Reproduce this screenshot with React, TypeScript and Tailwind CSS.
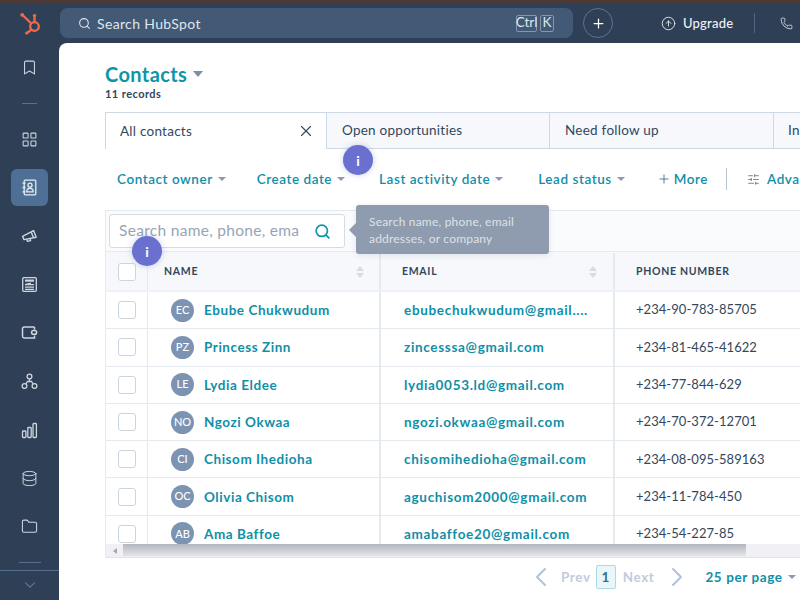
import {
  Bookmark,
  ChevronDown,
  ChevronLeft,
  ChevronRight,
  CircleArrowUp,
  Database,
  Folder,
  LayoutGrid,
  Phone,
  Plus,
  Search,
  SlidersHorizontal,
  X,
} from "lucide-react";

const contacts = [
  { initials: "EC", name: "Ebube Chukwudum", email: "ebubechukwudum@gmail....", phone: "+234-90-783-85705" },
  { initials: "PZ", name: "Princess Zinn", email: "zincesssa@gmail.com", phone: "+234-81-465-41622" },
  { initials: "LE", name: "Lydia Eldee", email: "lydia0053.ld@gmail.com", phone: "+234-77-844-629" },
  { initials: "NO", name: "Ngozi Okwaa", email: "ngozi.okwaa@gmail.com", phone: "+234-70-372-12701" },
  { initials: "CI", name: "Chisom Ihedioha", email: "chisomihedioha@gmail.com", phone: "+234-08-095-589163" },
  { initials: "OC", name: "Olivia Chisom", email: "aguchisom2000@gmail.com", phone: "+234-11-784-450" },
  { initials: "AB", name: "Ama Baffoe", email: "amabaffoe20@gmail.com", phone: "+234-54-227-85" },
];

function Caret({ className }: { className: string }) {
  return <span className={"inline-block h-0 w-0 border-x-[4px] border-t-[4px] border-x-transparent " + className} />;
}

function HubSpotLogo() {
  return (
    <svg width="22" height="24" viewBox="0 0 22 24" fill="none" stroke="#f2694a" strokeWidth="2.3" strokeLinecap="round">
      <circle cx="15.5" cy="15.5" r="4.3" />
      <path d="M15.5 11V5" />
      <path d="M12 12.3 4 4.5" />
      <path d="M12.2 18.8 8 22" />
      <circle cx="3.2" cy="3.8" r="1.9" fill="#f2694a" stroke="none" />
      <circle cx="7.6" cy="22" r="1.5" fill="#f2694a" stroke="none" />
      <circle cx="15.5" cy="4.6" r="1.7" fill="#f2694a" stroke="none" />
    </svg>
  );
}

function ContactBookIcon() {
  return (
    <svg width="17" height="17" viewBox="0 0 17 17" fill="none" stroke="currentColor" strokeWidth="1.3">
      <rect x="3.2" y="1.2" width="11.6" height="14.6" rx="1" />
      <circle cx="9" cy="6.2" r="2" />
      <path d="M5.8 12.8c0-2.3 1.4-3.4 3.2-3.4s3.2 1.1 3.2 3.4z" />
      <path d="M1.5 4.2h3M1.5 8.5h3M1.5 12.8h3" />
    </svg>
  );
}

function MegaphoneIcon() {
  return (
    <svg width="17" height="17" viewBox="0 0 17 17" fill="none" stroke="currentColor" strokeWidth="1.4" strokeLinejoin="round">
      <path d="M1.5 9.3 12.6 3.6l2.6 6.6L3 12.6z" />
      <path d="M10.2 4.9l2.4 6.2" />
      <path d="M5.6 12.2l1 2.2 3-.8-.5-2.2" />
    </svg>
  );
}

function ArticleIcon() {
  return (
    <svg width="17" height="17" viewBox="0 0 17 17" fill="none" stroke="currentColor" strokeWidth="1.3">
      <rect x="1.7" y="1.7" width="13.6" height="13.6" rx="1" />
      <path d="M4 4.6h9" strokeWidth="2.2" />
      <path d="M10 7.2 4 8.6h9M4 11.2h9M4 13.4h9" />
    </svg>
  );
}

function WalletIcon() {
  return (
    <svg width="17" height="17" viewBox="0 0 17 17" fill="none" stroke="currentColor" strokeWidth="1.5">
      <path d="M13.5 3H3.2C2.2 3 1.5 3.7 1.5 4.7v7.6c0 1 .7 1.7 1.7 1.7h10.3v-2.6" />
      <path d="M13.5 3v2.6" />
      <rect x="10.6" y="6.6" width="5" height="3.6" rx="1.8" />
    </svg>
  );
}

function OrgIcon() {
  return (
    <svg width="17" height="17" viewBox="0 0 17 17" fill="none" stroke="currentColor" strokeWidth="1.3">
      <circle cx="8.5" cy="3.5" r="2.4" />
      <circle cx="3.5" cy="13" r="2.4" />
      <circle cx="13.5" cy="13" r="2.4" />
      <path d="M8.5 6v2.5M4.8 11 6.5 8.5h4l1.7 2.5" />
    </svg>
  );
}

function BarsIcon() {
  return (
    <svg width="17" height="17" viewBox="0 0 17 17" fill="none" stroke="currentColor" strokeWidth="1.3">
      <rect x="1.5" y="9" width="3.4" height="6.5" rx="0.8" />
      <rect x="6.8" y="5.5" width="3.4" height="10" rx="0.8" />
      <rect x="12" y="1.5" width="3.4" height="14" rx="0.8" />
    </svg>
  );
}

function SortArrows() {
  return (
    <span className="flex flex-col items-center gap-[2px]">
      <span className="h-0 w-0 border-x-[4px] border-b-[5px] border-x-transparent border-b-[#d5dce6]" />
      <span className="h-0 w-0 border-x-[4px] border-t-[5px] border-x-transparent border-t-[#d5dce6]" />
    </span>
  );
}

function FilterButton({ label, className }: { label: string; className: string }) {
  return (
    <span className={"flex items-center gap-[5px] text-[13.5px] font-semibold tracking-[0.55px] text-[#0f8fa8] " + className}>
      {label}
      <Caret className="border-t-[#8a9bb0]" />
    </span>
  );
}

function InfoBadge({ className }: { className: string }) {
  return (
    <span
      className={
        "absolute flex h-[30px] w-[30px] items-center justify-center rounded-full bg-[#6a70cf] text-[14px] font-bold text-white shadow-[0_0_6px_rgba(106,112,207,0.35)] " +
        className
      }
    >
      i
    </span>
  );
}

export default function App() {
  const railIcon = "flex h-[37px] w-[37px] items-center justify-center text-[#cdd6e0]";

  return (
    <div className="relative flex h-[600px] w-[800px] flex-col overflow-hidden bg-[#2f3f55] font-['Lato',sans-serif] text-[#33475b]">
      <div className="h-[3px] shrink-0 bg-[#4b3a36]" />

      {/* Top bar */}
      <header className="flex h-[40px] shrink-0 items-center">
        <div className="flex w-[60px] shrink-0 justify-center pr-[1px]">
          <HubSpotLogo />
        </div>
        <div className="flex h-[30px] w-[513px] items-center rounded-[8px] bg-[#435a77] pl-[18px] pr-[19px] text-[#dfe6ee]">
          <Search size={13} strokeWidth={2} />
          <span className="ml-[6px] text-[14px] tracking-[0.35px]">Search HubSpot</span>
          <span className="ml-auto flex items-center gap-[3px] text-[13.5px] leading-none">
            <span className="flex h-[17px] w-[21px] items-center justify-center rounded-[2px] border border-[#8097b1]">Ctrl</span>
            <span className="flex h-[17px] w-[14px] items-center justify-center rounded-[2px] border border-[#8097b1]">K</span>
          </span>
        </div>
        <span className="ml-[10px] flex h-[30px] w-[30px] items-center justify-center rounded-full border border-[#5d7490] text-white">
          <Plus size={15} strokeWidth={2} />
        </span>
        <span className="ml-[48px] mt-[1px] flex items-center text-[13px] font-medium tracking-[0.2px] text-[#eef2f6]">
          <CircleArrowUp size={15} strokeWidth={1.4} className="mr-[7px]" />
          Upgrade
        </span>
        <span className="ml-[21px] h-[20px] w-px bg-[#4e6480]" />
        <Phone size={13} strokeWidth={1.5} className="ml-[25px] text-[#dfe6ee]" />
      </header>

      <div className="flex min-h-0 flex-1">
        {/* Left rail */}
        <nav className="flex w-[59px] shrink-0 flex-col items-center pt-[6px]">
          <span className={railIcon}>
            <Bookmark size={17} strokeWidth={1.5} />
          </span>
          <span className="mt-[17px] h-px w-[15px] bg-[#52708f]" />
          <span className={railIcon + " mt-[17px]"}>
            <LayoutGrid size={17} strokeWidth={1.5} />
          </span>
          <span className="mt-[11px] flex h-[37px] w-[37px] items-center justify-center rounded-[6px] bg-[#4f7096] text-[#e6ecf2]">
            <ContactBookIcon />
          </span>
          <span className={railIcon + " mt-[11px]"}>
            <MegaphoneIcon />
          </span>
          <span className={railIcon + " mt-[12px]"}>
            <ArticleIcon />
          </span>
          <span className={railIcon + " mt-[11px]"}>
            <WalletIcon />
          </span>
          <span className={railIcon + " mt-[12px]"}>
            <OrgIcon />
          </span>
          <span className={railIcon + " mt-[12px]"}>
            <BarsIcon />
          </span>
          <span className={railIcon + " mt-[11px]"}>
            <Database size={17} strokeWidth={1.4} />
          </span>
          <span className={railIcon + " mt-[11px]"}>
            <Folder size={17} strokeWidth={1.5} />
          </span>
          <span className="mt-[17px] h-px w-[22px] bg-[#52708f]" />
          <div className="mt-[7px] flex h-[30px] w-full justify-center border-t border-[#52708f] pt-[5px] text-[#6f87a3]">
            <ChevronDown size={18} strokeWidth={1.4} />
          </div>
        </nav>

        {/* Main card */}
        <main className="min-w-0 flex-1 rounded-tl-[8px] bg-white pl-[46px] pt-[20px]">
          <div className="flex h-[22px] items-center gap-[6px]">
            <h1 className="text-[20px] font-bold tracking-[0.4px] text-[#0f95ab]">Contacts</h1>
            <Caret className="border-x-[5.5px] border-t-[6px] border-t-[#7c8fa6]" />
          </div>
          <p className="mt-[1px] text-[11px] font-bold tracking-[0.45px] text-[#33475b]">11 records</p>

          {/* Saved views */}
          <div className="mt-[9.5px] flex h-[37px] w-[695px] overflow-hidden text-[13.5px] tracking-[0.25px]">
            <div className="flex w-[222px] shrink-0 items-center justify-between border-x border-t border-[#cfd8e6] bg-white pl-[14px] pr-[11px]">
              All contacts
              <X size={18} strokeWidth={1.5} />
            </div>
            <div className="flex w-[223px] shrink-0 items-center border-y border-r border-[#cfd8e6] bg-[#f6f8fb] pl-[15px]">
              Open opportunities
            </div>
            <div className="flex w-[224px] shrink-0 items-center border-y border-r border-[#cfd8e6] bg-[#f6f8fb] pl-[15px]">
              Need follow up
            </div>
            <div className="flex flex-1 items-center border-y border-[#cfd8e6] bg-[#f6f8fb] pl-[14px]">In</div>
          </div>

          {/* Filters */}
          <div className="flex h-[61px] items-center whitespace-nowrap pb-[1px]">
            <FilterButton label="Contact owner" className="ml-[12px]" />
            <FilterButton label="Create date" className="ml-[31px]" />
            <FilterButton label="Last activity date" className="ml-[34px]" />
            <FilterButton label="Lead status" className="ml-[35px]" />
            <span className="ml-[32px] flex items-center gap-[3px] text-[13.5px] font-semibold tracking-[0.55px] text-[#0f8fa8]">
              <Plus size={14} strokeWidth={1.7} className="text-[#5f7691]" />
              More
            </span>
            <span className="ml-[18px] h-[22px] w-px shrink-0 bg-[#b9c5d3]" />
            <SlidersHorizontal size={13} strokeWidth={1.6} className="ml-[20px] shrink-0 text-[#5f7691]" />
            <span className="ml-[7px] text-[13.5px] font-semibold tracking-[0.55px] text-[#0f8fa8]">Advanced</span>
          </div>

          {/* Table */}
          <section className="w-[695px] border-l border-[#e5e9f0]">
            <div className="flex h-[42px] items-center border-y border-[#e5e9f0] bg-[#fafbfd] pl-[3px]">
              <div className="flex h-[34px] w-[236px] items-center overflow-hidden rounded-[3px] border border-[#d5dce6] bg-white pl-[9px] pr-[13px]">
                <span className="w-[181px] overflow-hidden whitespace-nowrap text-[15.5px] tracking-[0.3px] text-[#95a5b8]">
                  Search name, phone, email
                </span>
                <Search size={17} strokeWidth={2.4} className="ml-auto text-[#0f95ab]" />
              </div>
            </div>

            <div className="flex h-[40px] items-center border-b-[2px] border-[#eef1f6] bg-[#f6f8fb] pt-[1px] text-[10.5px] font-bold tracking-[0.7px] text-[#33475b]">
              <div className="flex h-full w-[42px] shrink-0 items-center border-r border-[#e5e9f0] pl-[12px]">
                <span className="h-[18px] w-[18px] rounded-[3px] border-[1.5px] border-[#cbd5e1] bg-white" />
              </div>
              <div className="flex h-full w-[233px] shrink-0 items-center justify-between border-r-[2px] border-[#e5e9f0] pl-[16px] pr-[15px]">
                NAME
                <SortArrows />
              </div>
              <div className="flex h-full w-[234px] shrink-0 items-center justify-between border-r-[2px] border-[#e5e9f0] pl-[21px] pr-[16px]">
                EMAIL
                <SortArrows />
              </div>
              <div className="pl-[21px]">PHONE NUMBER</div>
            </div>

            <div className="h-[252px] overflow-hidden">
              {contacts.map((c) => (
                <div key={c.initials} className="flex h-[37.3px] items-center border-b border-[#e5e9f0] text-[13.5px]">
                  <div className="flex h-full w-[42px] shrink-0 items-center border-r border-[#e5e9f0] pl-[12px]">
                    <span className="h-[18px] w-[18px] rounded-[3px] border-[1.5px] border-[#cbd5e1] bg-white" />
                  </div>
                  <div className="flex h-full w-[233px] shrink-0 items-center border-r-[2px] border-[#e5e9f0] pl-[23px]">
                    <span className="flex h-[23px] w-[23px] shrink-0 items-center justify-center rounded-full bg-[#7c93b2] text-[11px] font-medium text-white">
                      {c.initials}
                    </span>
                    <span className="ml-[10px] font-bold tracking-[0.55px] text-[#0f8fa8]">{c.name}</span>
                  </div>
                  <div className="flex h-full w-[234px] shrink-0 items-center border-r-[2px] border-[#e5e9f0] pl-[23px] font-bold tracking-[0.68px] text-[#0f8fa8]">
                    {c.email}
                  </div>
                  <div className="pl-[21px] text-[13px] tracking-[0.05px] text-[#33475b]">{c.phone}</div>
                </div>
              ))}
            </div>

            {/* Horizontal scrollbar */}
            <div className="flex h-[14px] items-stretch border-b border-[#dfe3ea] bg-[#f1f1f5]">
              <div className="flex w-[17px] items-center justify-center">
                <span className="h-0 w-0 border-y-[3px] border-r-[4px] border-y-transparent border-r-[#a3a8b2]" />
              </div>
              <div className="h-[12px] w-[623px] bg-gradient-to-b from-[#b5b7bf] to-[#e4e5ea]" />
            </div>
          </section>

          {/* Pagination */}
          <div className="mt-[3px] flex h-[32px] w-[695px] items-center whitespace-nowrap text-[13.5px] font-bold tracking-[0.6px]">
            <ChevronLeft size={32} strokeWidth={1.5} className="ml-[420px] shrink-0 text-[#b3c2d8]" />
            <span className="ml-[4px] text-[#c0ccdc]">Prev</span>
            <span className="ml-[5px] flex h-[24px] w-[20px] items-center justify-center rounded-[2px] border border-[#a9dbe4] bg-[#e9f7fa] text-[#33708a]">
              1
            </span>
            <span className="ml-[7px] text-[#c0ccdc]">Next</span>
            <ChevronRight size={32} strokeWidth={1.5} className="ml-[7px] shrink-0 text-[#b3c2d8]" />
            <span className="ml-[12px] text-[#0f8fa8]">25 per page</span>
            <Caret className="ml-[5px] border-t-[#8a9bb0]" />
          </div>
        </main>
      </div>

      {/* Guided tour overlays */}
      <InfoBadge className="left-[343px] top-[145px]" />
      <InfoBadge className="left-[132px] top-[236px]" />
      <div className="absolute left-[356px] top-[205px] h-[49px] w-[193px] rounded-[3px] bg-[#8f9bae] pl-[13px] pt-[8px] text-[12px] leading-[17px] tracking-[0.2px] text-[#dde2e9] shadow-[0_1px_6px_rgba(51,71,91,0.12)]">
        <span className="absolute left-[-7px] top-[18px] h-0 w-0 border-y-[7px] border-r-[7px] border-y-transparent border-r-[#8f9bae]" />
        Search name, phone, email
        <br />
        addresses, or company
      </div>
    </div>
  );
}
